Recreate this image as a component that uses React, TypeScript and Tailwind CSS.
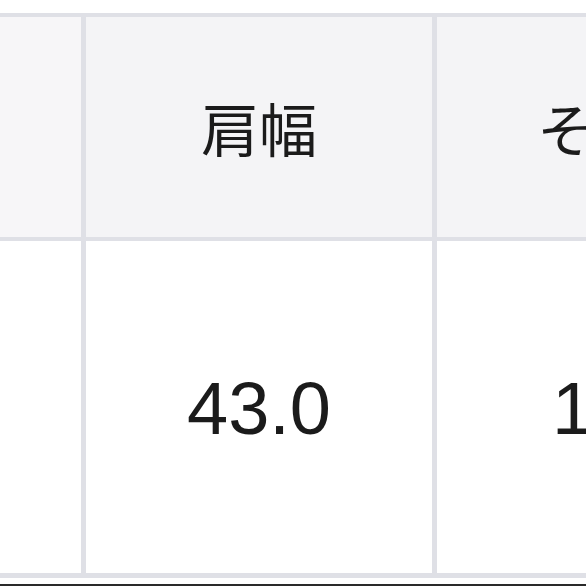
export default function App() {
  const font = { fontFamily: '"Liberation Sans", "Noto Sans CJK JP", sans-serif' };
  return (
    <div className="w-[586px] h-[586px] overflow-hidden bg-white relative" style={font}>
      <div className="pt-[13px]">
        <div className="w-[1000px] border-t-[4px] border-b-[5px] border-[#dfe0e6]">
          {/* header row */}
          <div className="flex h-[220px] bg-[#f4f4f6] text-[#1b1b1b]">
            <div className="w-[81px] shrink-0 bg-[#f7f6f8]" />
            <div className="w-[5px] shrink-0 bg-[#dfe0e6]" />
            <div className="w-[346px] shrink-0 flex items-center justify-center text-[58px] leading-none pt-[10px]">
              肩幅
            </div>
            <div className="w-[5px] shrink-0 bg-[#dfe0e6]" />
            <div className="w-[374px] shrink-0 flex items-center justify-center text-[58px] leading-none pt-[10px]">
              そで丈
            </div>
          </div>
          <div className="h-[4px] bg-[#dfe0e6]" />
          {/* body row */}
          <div className="flex h-[332px] bg-white text-[#1b1b1b]">
            <div className="w-[81px] shrink-0" />
            <div className="w-[5px] shrink-0 bg-[#dfe0e6]" />
            <div className="w-[346px] shrink-0 flex items-center justify-center text-[74px] leading-none pt-[4px]">
              43.0
            </div>
            <div className="w-[5px] shrink-0 bg-[#dfe0e6]" />
            <div className="w-[374px] shrink-0 flex items-center justify-center text-[74px] leading-none pt-[4px]">
              18.0
            </div>
          </div>
        </div>
        <div className="h-[6px] bg-white" />
        <div className="h-[4px] bg-[#2a2a2a]" />
      </div>
    </div>
  );
}
